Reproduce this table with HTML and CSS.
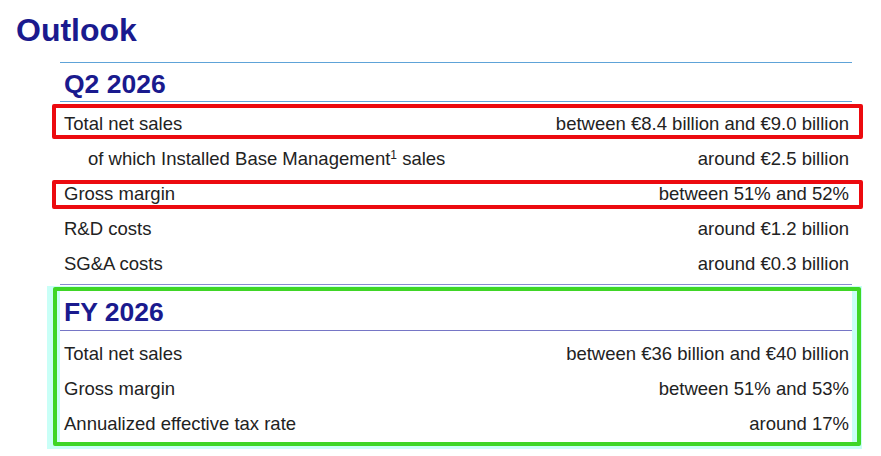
FILE: index.html
```html
<!DOCTYPE html>
<html lang="en">
<head>
<meta charset="utf-8">
<title>Outlook</title>
<link rel="stylesheet" href="styles.css">
</head>
<body>
<h1 class="title">Outlook</h1>
<div class="content">
  <section class="section q2">
    <h2 class="section-head">Q2 2026</h2>
    <div class="rows rows-q2">
      <div class="row mark mark-a"><span>Total net sales</span><span>between €8.4 billion and €9.0 billion</span></div>
      <div class="row"><span class="indent">of which Installed Base Management<sup>1</sup> sales</span><span>around €2.5 billion</span></div>
      <div class="row mark mark-b"><span>Gross margin</span><span>between 51% and 52%</span></div>
      <div class="row"><span>R&amp;D costs</span><span>around €1.2 billion</span></div>
      <div class="row"><span>SG&amp;A costs</span><span>around €0.3 billion</span></div>
    </div>
  </section>
  <div class="glow">
    <div class="green-box">
      <section class="section fy">
        <h2 class="section-head fy-head">FY 2026</h2>
        <div class="rows rows-fy">
          <div class="row"><span>Total net sales</span><span>between €36 billion and €40 billion</span></div>
          <div class="row"><span>Gross margin</span><span>between 51% and 53%</span></div>
          <div class="row"><span>Annualized effective tax rate</span><span>around 17%</span></div>
        </div>
      </section>
    </div>
  </div>
</div>
</body>
</html>
```
FILE: styles.css
```css
html, body {
  margin: 0;
  padding: 0;
  background: #ffffff;
}
body {
  font-family: "Liberation Sans", Arial, sans-serif;
  color: #222222;
  width: 881px;
  height: 456px;
  overflow: hidden;
}
.title {
  margin: 14px 0 0 16px;
  font-size: 32px;
  line-height: 32px;
  font-weight: bold;
  color: #1a1a8e;
}
.content {
  margin: 16px 0 0 60px;
  width: 792px;
}
.section.q2 {
  border-top: 1px solid #5ea3d8;
  border-bottom: 1px solid #8a8ad0;
}
.section-head {
  margin: 0;
  padding: 8px 0 4px 4px;
  font-size: 26.5px;
  line-height: 26px;
  font-weight: bold;
  color: #1a1a8e;
  border-bottom: 1px solid #5ea3d8;
}
.fy-head {
  padding-bottom: 5px;
  border-bottom-color: #7676c6;
}
.rows-q2 {
  padding: 4px 0 3px;
}
.rows-fy {
  padding: 5px 0 1px;
}
.row {
  position: relative;
  display: flex;
  justify-content: space-between;
  height: 35px;
  line-height: 35px;
  font-size: 18.5px;
  padding: 0 3px 0 4px;
}
.indent {
  padding-left: 24px;
}
sup {
  font-size: 12px;
  line-height: 0;
  vertical-align: 6px;
}
.mark::before {
  content: "";
  position: absolute;
  left: -8px;
  right: -11px;
  border: 4px solid #ec0a0f;
  border-radius: 2px;
  pointer-events: none;
}
.mark-a::before {
  top: -2px;
  height: 27px;
}
.mark-b::before {
  top: 4px;
  height: 21px;
}
.glow {
  margin: 1px 0 0 -13px;
  width: 808px;
  padding: 1px 1px 3px 6px;
  background: #c9fff7;
}
.green-box {
  border: 4px solid #3fd626;
  border-radius: 2px;
  padding-left: 3px;
  padding-right: 5px;
  background: #c9fff7;
}
.section.fy {
  width: 792px;
  background: #ffffff;
}
```
